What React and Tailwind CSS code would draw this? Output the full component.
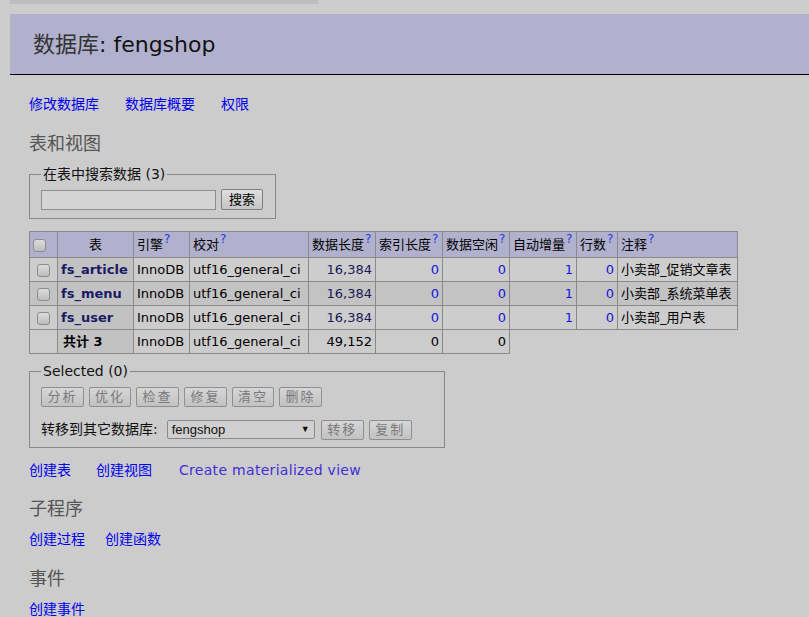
import React from 'react';

const font = { fontFamily: '"DejaVu Sans", "Noto Sans CJK SC", sans-serif' };

function Box() {
    return <span className="inline-block w-[13px] h-[13px] rounded-[3px] border border-[#8c8c8c] bg-gradient-to-b from-[#dcdcdc] to-[#bdbdbd] align-middle" />;
}

function Q() {
    return <span className="text-[12px] leading-none text-[#2a3ae0] ml-[1px] relative -top-[6px]">?</span>;
}

function Btn({ children, w }) {
    return (
        <span className={`inline-flex items-center justify-center h-[20px] ${w} border border-[#8f8f8f] rounded-[2px] bg-gradient-to-b from-[#d6d6d6] to-[#c2c2c2] text-[#7a7a7a] text-[13px] tracking-[2px]`}>
            {children}
        </span>
    );
}

const rows = [
    { name: 'fs_article', note: '小卖部_促销文章表', even: false },
    { name: 'fs_menu', note: '小卖部_系统菜单表', even: true },
    { name: 'fs_user', note: '小卖部_用户表', even: false },
];

export default function App() {
    const td = 'border border-[#8a8a8a] px-[3px] h-[24px]';
    const th = 'border border-[#8a8a8a] px-[3px] h-[26px] font-normal text-left bg-[#b1b1cd]';
    return (
        <div className="min-h-screen bg-[#cccccc] text-black pb-4" style={font}>
            <div className="ml-[10px] w-[308px] h-[4px] bg-[#bdbdbd]" />

            {/* Header */}
            <div className="ml-[10px] mt-[10px] h-[61px] bg-[#b1b1cd] border-b border-black flex items-center pl-[23px]">
                <h1 className="text-[22px] text-[#111] pt-[1px]">
                    <span className="text-[#333]">数据库</span>: fengshop
                </h1>
            </div>

            <div className="pl-[29px]">
                <div className="mt-[19px] flex gap-[26px] text-[14px] text-[#0000ee] leading-[20px]">
                    <a>修改数据库</a>
                    <a>数据库概要</a>
                    <a>权限</a>
                </div>

                <h2 className="mt-[19px] text-[18px] text-[#555] leading-[22px]">表和视图</h2>

                <fieldset className="mt-[9px] w-[247px] border border-[#888] px-[11px] pb-[8px] pt-[4px]">
                    <legend className="text-[14px] px-[2px] text-[#111]">在表中搜索数据 (3)</legend>
                    <div className="flex items-center gap-[5px]">
                        <span className="block w-[175px] h-[20px] border border-[#8f8f8f] bg-[#d4d4d4]" />
                        <span className="inline-flex items-center justify-center h-[21px] w-[42px] border border-[#7f7f7f] rounded-[2px] bg-gradient-to-b from-[#dedede] to-[#c4c4c4] text-[13px] text-black">搜索</span>
                    </div>
                </fieldset>

                <table className="mt-[12px] border-collapse text-[13px]">
                    <thead>
                        <tr>
                            <th className={`${th} w-[28px] text-center`}><Box /></th>
                            <th className={`${th} w-[76px]`} style={{ textAlign: 'center' }}>表</th>
                            <th className={`${th} w-[56px]`}>引擎<Q /></th>
                            <th className={`${th} w-[119px]`}>校对<Q /></th>
                            <th className={`${th} w-[67px]`}>数据长度<Q /></th>
                            <th className={`${th} w-[67px]`}>索引长度<Q /></th>
                            <th className={`${th} w-[67px]`}>数据空闲<Q /></th>
                            <th className={`${th} w-[67px]`}>自动增量<Q /></th>
                            <th className={`${th} w-[41px]`}>行数<Q /></th>
                            <th className={`${th} w-[120px]`}>注释<Q /></th>
                        </tr>
                    </thead>
                    <tbody>
                        {rows.map(r => (
                            <tr key={r.name} className={r.even ? 'bg-[#c3c3c3]' : 'bg-[#cdcdcd]'}>
                                <td className={`${td} text-center`}><Box /></td>
                                <td className={`${td} bg-[#c2c2c2] font-bold text-[#1a1a66]`}>{r.name}</td>
                                <td className={td}>InnoDB</td>
                                <td className={td}>utf16_general_ci</td>
                                <td className={`${td} text-right text-[#1a1a55]`}>16,384</td>
                                <td className={`${td} text-right text-[#1515dd]`}>0</td>
                                <td className={`${td} text-right text-[#1515dd]`}>0</td>
                                <td className={`${td} text-right text-[#1515dd]`}>1</td>
                                <td className={`${td} text-right text-[#1515dd]`}>0</td>
                                <td className={td}>{r.note}</td>
                            </tr>
                        ))}
                        <tr>
                            <td className={`${td} h-[21px]`} />
                            <td className={`${td} h-[21px] bg-[#c2c2c2] font-bold pl-[5px]`}>共计 3</td>
                            <td className={`${td} h-[21px]`}>InnoDB</td>
                            <td className={`${td} h-[21px]`}>utf16_general_ci</td>
                            <td className={`${td} h-[21px] text-right font-normal`}>49,152</td>
                            <td className={`${td} h-[21px] text-right`}>0</td>
                            <td className={`${td} h-[21px] text-right`}>0</td>
                            <td className="h-[21px]" colSpan={4} />
                        </tr>
                    </tbody>
                </table>

                <fieldset className="mt-[7px] w-[416px] border border-[#888] px-[11px] pb-[7px] pt-[5px]">
                    <legend className="text-[14px] px-[2px] text-[#111]">Selected (0)</legend>
                    <div className="flex gap-[5px]">
                        <Btn w="w-[43px]">分析</Btn>
                        <Btn w="w-[42px]">优化</Btn>
                        <Btn w="w-[43px]">检查</Btn>
                        <Btn w="w-[43px]">修复</Btn>
                        <Btn w="w-[42px]">清空</Btn>
                        <Btn w="w-[43px]">删除</Btn>
                    </div>
                    <div className="mt-[12px] flex items-center text-[14px]">
                        <span className="mr-[9px] text-[#111]">转移到其它数据库:</span>
                        <span className="flex items-center justify-between w-[148px] h-[19px] border border-[#8a8a8a] rounded-[2px] bg-[#d0d0d0] px-[4px] text-[13px] text-[#111]" style={{ fontFamily: '"Liberation Sans", Arial, sans-serif' }}>
                            fengshop<span className="text-[9px]">▼</span>
                        </span>
                        <span className="ml-[6px]"><Btn w="w-[43px]">转移</Btn></span>
                        <span className="ml-[5px]"><Btn w="w-[43px]">复制</Btn></span>
                    </div>
                </fieldset>

                <div className="mt-[12px] flex gap-[25px] text-[14px] leading-[20px]">
                    <a className="text-[#0000ee]">创建表</a>
                    <a className="text-[#0000ee]">创建视图</a>
                    <a className="text-[#3f2fd6] ml-[2px] tracking-[0.3px]">Create materialized view</a>
                </div>

                <h2 className="mt-[18px] text-[18px] text-[#555] leading-[22px]">子程序</h2>
                <div className="mt-[9px] flex gap-[20px] text-[14px] text-[#0000ee] leading-[20px]">
                    <a>创建过程</a>
                    <a>创建函数</a>
                </div>

                <h2 className="mt-[19px] text-[18px] text-[#555] leading-[22px]">事件</h2>
                <div className="mt-[9px] text-[14px] text-[#0000ee] leading-[20px]">
                    <a>创建事件</a>
                </div>
            </div>
        </div>
    );
}
